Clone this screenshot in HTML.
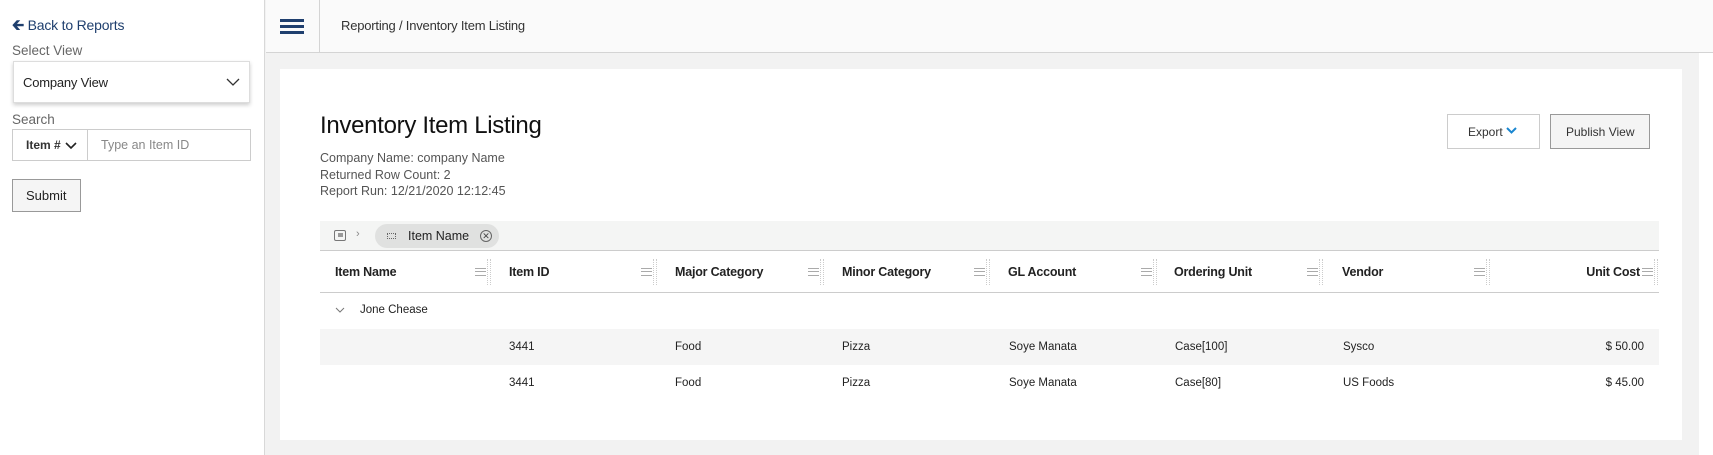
<!DOCTYPE html>
<html><head><meta charset="utf-8"><style>
*{box-sizing:border-box;margin:0;padding:0}
body{width:1713px;height:455px;overflow:hidden;font-family:"Liberation Sans",sans-serif;background:#f2f2f2;position:relative;color:#222}
.abs{position:absolute}
#side{left:0;top:0;width:265px;height:455px;background:#fff;border-right:1px solid #d8d8d8}
#hdr{left:266px;top:0;width:1447px;height:53px;background:#fafafa;border-bottom:1px solid #d4d4d4}
#card{left:280px;top:69px;width:1402px;height:371px;background:#fff}
.t{white-space:nowrap}
.hd{font-size:12.5px;font-weight:bold;color:#222;letter-spacing:-0.2px}
.cell{font-size:11.5px;color:#222}
.menu{width:11px;height:8px;border-top:1.5px solid #aaa;border-bottom:1.5px solid #aaa}
.menu:after{content:"";position:absolute;left:0;top:2px;width:11px;border-top:1.5px solid #aaa}
.dots{width:4px;height:26px;border-left:1px dotted #ccc;border-right:1px dotted #ccc}
</style></head><body>
<div id="side" class="abs">
  <div class="abs t" style="left:12px;top:15px;font-size:14px;color:#1f3f6e;letter-spacing:-0.2px"><b style="font-size:15px">&#129136;</b> Back to Reports</div>
  <div class="abs t" style="left:12px;top:43px;font-size:13.5px;color:#666">Select View</div>
  <div class="abs" style="left:13px;top:61px;width:237px;height:42px;border:1px solid #ddd;box-shadow:0 2px 4px rgba(0,0,0,.2)">
    <div class="abs t" style="left:9px;top:13px;font-size:13px;letter-spacing:-0.2px">Company View</div>
    <svg class="abs" style="left:212px;top:16px" width="14" height="9"><path d="M1 1l6 6 6-6" fill="none" stroke="#333" stroke-width="1.3"/></svg>
  </div>
  <div class="abs t" style="left:12px;top:112px;font-size:13.5px;color:#666">Search</div>
  <div class="abs" style="left:12px;top:129px;width:239px;height:32px;border:1px solid #ccc">
    <div class="abs t" style="left:13px;top:8px;font-size:12px;font-weight:bold;color:#333">Item #</div>
    <svg class="abs" style="left:52px;top:12px" width="12" height="8"><path d="M1 1l5 5 5-5" fill="none" stroke="#222" stroke-width="1.6"/></svg>
    <div class="abs" style="left:74px;top:0;height:30px;border-left:1px solid #ccc"></div>
    <div class="abs t" style="left:88px;top:8px;font-size:12.5px;color:#888">Type an Item ID</div>
  </div>
  <div class="abs" style="left:12px;top:179px;width:69px;height:33px;border:1px solid #999;background:#f5f5f5"><div class="abs t" style="left:13px;top:8px;font-size:13px">Submit</div></div>
</div>
<div id="hdr" class="abs">
  <div class="abs" style="left:14px;top:19px;width:24px;height:15px;border-top:3px solid #1f3f6e;border-bottom:3px solid #1f3f6e"><div class="abs" style="left:0;top:3px;width:24px;border-top:3px solid #1f3f6e"></div></div>
  <div class="abs" style="left:53px;top:0;height:52px;border-left:1px solid #d4d4d4"></div>
  <div class="abs t" style="left:75px;top:18px;font-size:13px;color:#333;letter-spacing:-0.2px">Reporting / Inventory Item Listing</div>
</div>
<div class="abs" style="left:1699px;top:53px;width:14px;height:402px;background:#fff"></div>
<div id="card" class="abs">
  <div class="abs t" style="left:40px;top:43px;font-size:24px;color:#111;letter-spacing:-0.3px">Inventory Item Listing</div>
  <div class="abs t" style="left:40px;top:81px;font-size:12.5px;color:#555;line-height:16.5px">Company Name: company Name<br>Returned Row Count: 2<br>Report Run: 12/21/2020 12:12:45</div>
  <div class="abs" style="left:1167px;top:45px;width:93px;height:35px;border:1px solid #ccc;background:#fff"><div class="abs t" style="left:20px;top:10px;font-size:12px;color:#333">Export <svg width="11" height="8" style="vertical-align:1px"><path d="M1 1l4.5 4.5 4.5-4.5" fill="none" stroke="#1a86d0" stroke-width="2"/></svg></div></div>
  <div class="abs" style="left:1270px;top:45px;width:100px;height:35px;border:1px solid #999;background:#f4f4f4"><div class="abs t" style="left:15px;top:10px;font-size:12px;color:#333">Publish View</div></div>
  <div class="abs" style="left:40px;top:152px;width:1339px;height:30px;background:#f4f5f4;border-bottom:1px solid #ccc">
    <div class="abs" style="left:14px;top:9px;width:12px;height:11px;border:1px solid #777;border-radius:2px"><div class="abs" style="left:3px;top:2px;width:5px;height:4px;background:#999"></div></div>
    <div class="abs t" style="left:36px;top:7px;font-size:11px;color:#888">&rsaquo;</div>
    <div class="abs" style="left:55px;top:3px;width:124px;height:24px;border-radius:12px;background:#e0e1e0">
      <div class="abs" style="left:12px;top:9px;width:9px;height:6px;border:1px dotted #666"></div>
      <div class="abs t" style="left:33px;top:5px;font-size:12.5px;color:#222">Item Name</div>
      <div class="abs" style="left:105px;top:6px;width:12px;height:12px;border:1px solid #666;border-radius:50%;font-size:9px;line-height:10px;text-align:center;color:#444">✕</div>
    </div>
  </div>
  <div class="abs" style="left:40px;top:182px;width:1339px;height:42px;border-bottom:1px solid #ccc"></div>
  <div class="abs t hd" style="left:55px;top:196px">Item Name</div>
  <div class="abs t hd" style="left:229px;top:196px">Item ID</div>
  <div class="abs t hd" style="left:395px;top:196px">Major Category</div>
  <div class="abs t hd" style="left:562px;top:196px">Minor Category</div>
  <div class="abs t hd" style="left:728px;top:196px">GL Account</div>
  <div class="abs t hd" style="left:894px;top:196px">Ordering Unit</div>
  <div class="abs t hd" style="left:1062px;top:196px">Vendor</div>
  <div class="abs t hd" style="left:1240px;top:196px;width:120px;text-align:right">Unit Cost</div>
  <div class="abs menu" style="left:195px;top:199px"></div><div class="abs dots" style="left:207px;top:190px"></div>
  <div class="abs menu" style="left:361px;top:199px"></div><div class="abs dots" style="left:373px;top:190px"></div>
  <div class="abs menu" style="left:528px;top:199px"></div><div class="abs dots" style="left:540px;top:190px"></div>
  <div class="abs menu" style="left:694px;top:199px"></div><div class="abs dots" style="left:706px;top:190px"></div>
  <div class="abs menu" style="left:861px;top:199px"></div><div class="abs dots" style="left:873px;top:190px"></div>
  <div class="abs menu" style="left:1027px;top:199px"></div><div class="abs dots" style="left:1039px;top:190px"></div>
  <div class="abs menu" style="left:1194px;top:199px"></div><div class="abs dots" style="left:1206px;top:190px"></div>
  <div class="abs menu" style="left:1362px;top:199px"></div><div class="abs dots" style="left:1374px;top:190px"></div>
  <svg class="abs" style="left:55px;top:238px" width="10" height="6"><path d="M1 1l4 4 4-4" fill="none" stroke="#777" stroke-width="1"/></svg>
  <div class="abs t cell" style="left:80px;top:235px">Jone Chease</div>
  <div class="abs" style="left:40px;top:260px;width:1339px;height:36px;background:#f5f5f5"></div>
  <div class="abs t cell" style="left:229px;top:272px">3441</div><div class="abs t cell" style="left:395px;top:272px">Food</div><div class="abs t cell" style="left:562px;top:272px">Pizza</div><div class="abs t cell" style="left:729px;top:272px">Soye Manata</div><div class="abs t cell" style="left:895px;top:272px">Case[100]</div><div class="abs t cell" style="left:1063px;top:272px">Sysco</div><div class="abs t cell" style="left:1264px;top:272px;width:100px;text-align:right">$ 50.00</div>
  <div class="abs t cell" style="left:229px;top:308px">3441</div><div class="abs t cell" style="left:395px;top:308px">Food</div><div class="abs t cell" style="left:562px;top:308px">Pizza</div><div class="abs t cell" style="left:729px;top:308px">Soye Manata</div><div class="abs t cell" style="left:895px;top:308px">Case[80]</div><div class="abs t cell" style="left:1063px;top:308px">US Foods</div><div class="abs t cell" style="left:1264px;top:308px;width:100px;text-align:right">$ 45.00</div>
</div>
</body></html>
